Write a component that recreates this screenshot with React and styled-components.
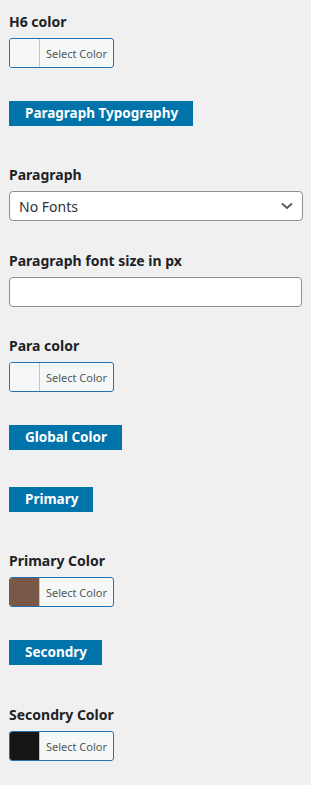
import React from "react";
import styled, { createGlobalStyle } from "styled-components";

const Global = createGlobalStyle`
  html, body { margin: 0; padding: 0; background: #f0f0f1; }
  body { font-family: "Noto Sans", "Open Sans", sans-serif; color: #1d2327; }
  * { box-sizing: border-box; }
`;

const Panel = styled.div`
  display: flex;
  flex-direction: column;
  padding: 12px 9px 20px 9px;
  width: 311px;
  min-height: 785px;
`;

const Control = styled.div`
  display: flex;
  flex-direction: column;
  align-items: flex-start;
  margin-bottom: ${(p) => p.$mb || 0}px;
`;

const Label = styled.div`
  font-size: 14px;
  font-weight: 700;
  line-height: 20px;
  margin-bottom: 6px;
  color: #1d2327;
`;

const SectionBar = styled.div`
  align-self: flex-start;
  background: #0073aa;
  color: #fff;
  font-size: 13.5px;
  font-weight: 700;
  line-height: 25px;
  height: 25px;
  padding: 0 15px 0 16px;
  margin-bottom: ${(p) => p.$mb || 0}px;
`;

const ColorButton = styled.button`
  display: flex;
  align-items: stretch;
  height: 30px;
  width: 105px;
  padding: 0;
  border: 1px solid #2271b1;
  border-radius: 3px;
  background: #f6f7f7;
  overflow: hidden;
  cursor: pointer;
  font-family: inherit;
`;

const Swatch = styled.span`
  width: 30px;
  flex: none;
  background: ${(p) => p.$color || "#f6f7f7"};
  border-right: 1px solid #c3c4c7;
`;

const ButtonText = styled.span`
  flex: 1;
  display: flex;
  align-items: center;
  justify-content: center;
  font-size: 11px;
  color: #50575e;
  padding: 0 2px;
`;

const SelectBox = styled.div`
  position: relative;
  width: 294px;
  height: 30px;
  border: 1px solid #8c8f94;
  border-radius: 4px;
  background: #fff;
  display: flex;
  align-items: center;
  padding: 0 24px 0 9px;
  font-size: 14px;
  color: #2c3338;
`;

const Chevron = styled.svg`
  position: absolute;
  right: 9px;
  top: 50%;
  transform: translateY(-50%);
`;

const TextInput = styled.input`
  width: 293px;
  height: 30px;
  border: 1px solid #8c8f94;
  border-radius: 4px;
  background: #fff;
  padding: 0 8px;
  font-size: 14px;
  font-family: inherit;
`;

const ColorControl = ({ label, color, mb }) => (
  <Control $mb={mb}>
    <Label>{label}</Label>
    <ColorButton type="button">
      <Swatch $color={color} />
      <ButtonText>Select Color</ButtonText>
    </ColorButton>
  </Control>
);

export default function App() {
  return (
    <>
      <Global />
      <Panel>
        <ColorControl label="H6 color" mb={33} />
        <SectionBar $mb={39}>Paragraph Typography</SectionBar>
        <Control $mb={30}>
          <Label>Paragraph</Label>
          <SelectBox>
            No Fonts
            <Chevron width="12" height="8" viewBox="0 0 12 8">
              <path d="M1 1.5 L6 6 L11 1.5" fill="none" stroke="#50575e" strokeWidth="1.8" />
            </Chevron>
          </SelectBox>
        </Control>
        <Control $mb={29}>
          <Label>Paragraph font size in px</Label>
          <TextInput type="text" />
        </Control>
        <ColorControl label="Para color" mb={33} />
        <SectionBar $mb={37}>Global Color</SectionBar>
        <SectionBar $mb={39}>Primary</SectionBar>
        <ColorControl label="Primary Color" color="#7a5848" mb={33} />
        <SectionBar $mb={40}>Secondry</SectionBar>
        <ColorControl label="Secondry Color" color="#161616" />
      </Panel>
    </>
  );
}
